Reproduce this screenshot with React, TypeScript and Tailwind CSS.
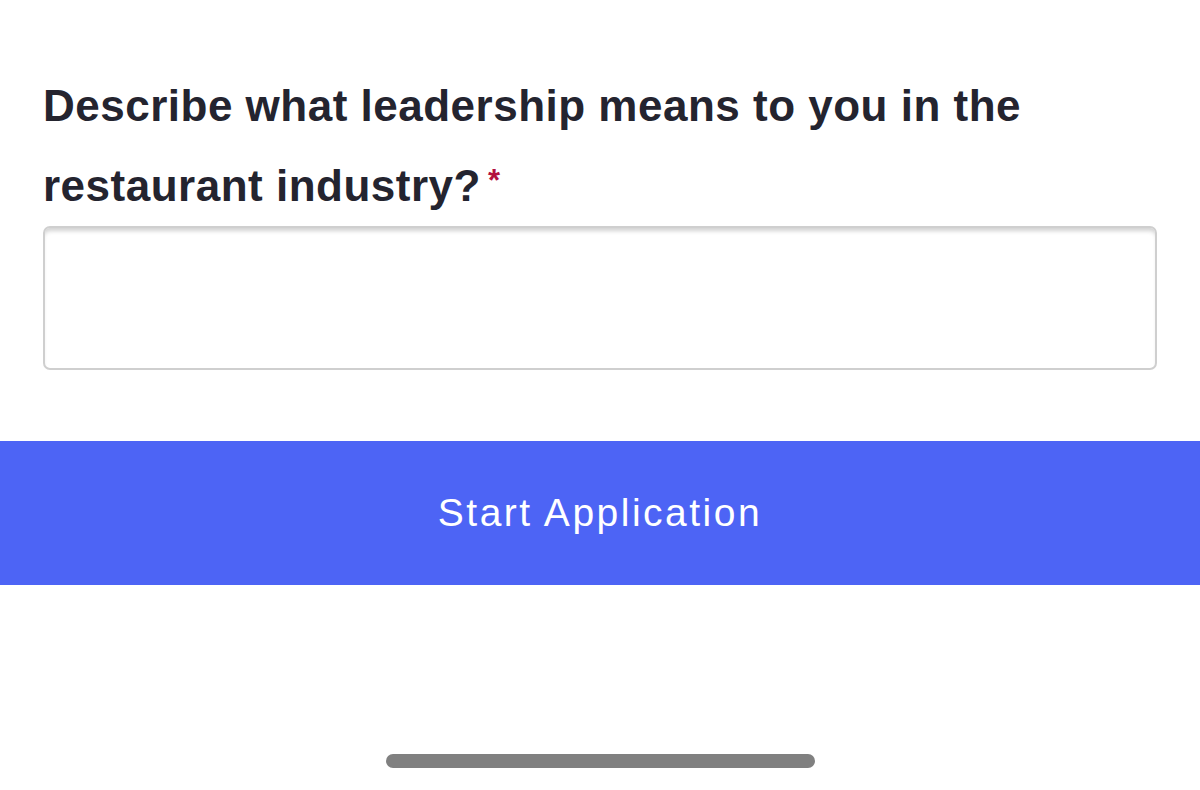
import React from 'react'

const App = () => {
  return (
    <div className="w-[1200px] h-[790px] bg-white flex flex-col font-['Liberation_Sans',Arial,sans-serif] overflow-hidden">
      {/* Question */}
      <div className="px-[43px] pt-[66px]">
        <h2 className="text-[44px] leading-[80px] font-bold text-[#24242f] tracking-[0.5px]">
          <span>Describe what leadership means to you in the restaurant industry?</span>
          <span className="inline-block text-[#b3123f] text-[31px] leading-none align-top mt-[19px] ml-[7px]">*</span>
        </h2>
        <textarea className="block w-full h-[144px] rounded-[7px] border-2 border-[#cfcfcf] bg-white shadow-[inset_0_5px_4px_-2px_rgba(0,0,0,0.18)] resize-none outline-none" />
      </div>

      {/* Start button */}
      <button className="mt-[71px] w-full h-[144px] bg-[#4d64f5] text-white text-[39px] tracking-[2.5px] flex items-center justify-center">
        Start Application
      </button>

      {/* Home indicator */}
      <div className="flex justify-center mt-[169px]">
        <div className="w-[429px] h-[14px] rounded-full bg-[#808080]" />
      </div>
    </div>
  )
}

export default App
